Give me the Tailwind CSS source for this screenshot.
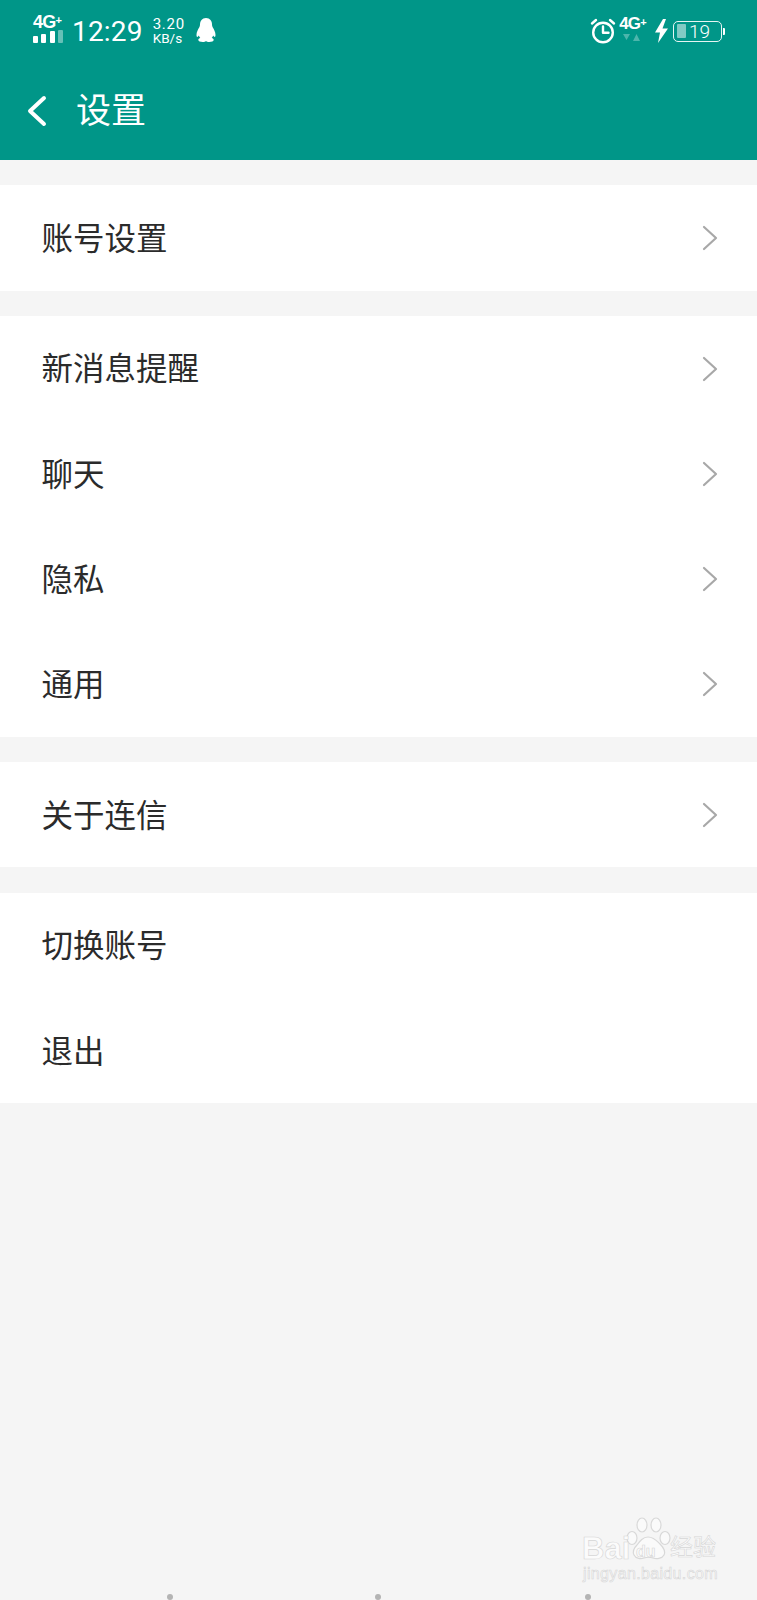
<!DOCTYPE html>
<html lang="zh-CN">
<head>
  <meta charset="UTF-8" />
  <meta name="viewport" content="width=device-width, initial-scale=1.0" />
  <title>设置</title>
  <script src="https://cdn.jsdelivr.net/npm/@tailwindcss/browser@4"></script>
</head>
<body class="bg-[#f5f5f5] font-['Roboto','Noto_Sans_CJK_SC',sans-serif]">
  <div class="relative w-[757px] h-[1600px] overflow-hidden bg-[#f5f5f5]">

    <!-- header -->
    <header class="h-[160px] bg-[#009688] text-white">
      <div class="flex items-center justify-between h-[62px] pl-[33px] pr-[32px]">
        <div class="flex items-center">
          <div class="flex flex-col w-[30px] h-[27px] -mt-[5px]">
            <span class="font-['Liberation_Sans'] font-bold text-[18px] leading-[14px] tracking-[-0.8px] whitespace-nowrap">4G<sup class="text-[11px] leading-none -top-[4px]">+</sup></span>
            <div class="flex items-end gap-[3.500px] h-[13px] mt-[0px]">
              <i class="block w-[5px] h-[7px] bg-white rounded-[1px]"></i>
              <i class="block w-[5px] h-[9px] bg-white rounded-[1px]"></i>
              <i class="block w-[5px] h-[12px] bg-white rounded-[1px]"></i>
              <i class="block w-[5px] h-[13px] bg-white/40 rounded-[1px]"></i>
            </div>
          </div>
          <span class="ml-[9px] text-[28px] leading-none tracking-[0.2px] mt-[2px]">12:29</span>
          <div class="ml-[10px] flex flex-col items-start mt-[-1px]">
            <span class="text-[15px] leading-[14px] tracking-[0.7px]">3.20</span>
            <span class="text-[13.500px] leading-[14px]">KB/s</span>
          </div>
          <svg class="ml-[11px] -mt-[2px]" width="20" height="24" viewBox="0 0 20 24" fill="#fff">
            <path d="M10 0C6 0 4 3 4 6.500c0 1.200-.2 2-.8 3C2 11.500 .5 14 .5 17c0 1.200.3 2 .8 2 .5 0 1-.6 1.500-1.400.3 1 .8 1.800 1.500 2.400-1.200.4-2 1-2 2 0 1.300 2 2 4.500 2 1.500 0 2.500-.4 3.200-1 .7.6 1.700 1 3.200 1 2.500 0 4.500-.7 4.500-2 0-1-.8-1.600-2-2 .7-.6 1.200-1.400 1.500-2.400.5.800 1 1.400 1.500 1.400.5 0 .8-.8.8-2 0-3-1.500-5.500-2.700-7.500-.6-1-.8-1.800-.8-3C16 3 14 0 10 0z"/>
          </svg>
        </div>

        <div class="flex items-center">
          <svg class="mr-[-2px]" width="26" height="26" viewBox="0 0 26 26" fill="none" stroke="#fff" stroke-width="2.400" stroke-linecap="round" stroke-linejoin="round">
            <circle cx="13" cy="14.500" r="9.800"/>
            <path d="M13 8.500v6.300h5.500"/>
            <path d="M2 5.500 6 2M24 5.500 20 2"/>
          </svg>
          <div class="ml-[5px] flex flex-col items-center w-[27px] -mt-[4px]">
            <span class="font-['Liberation_Sans'] font-bold text-[17px] leading-[15px] tracking-[-0.8px] whitespace-nowrap">4G<sup class="text-[11px] leading-none -top-[3px]">+</sup></span>
            <svg class="mt-[2px] mr-[2px]" width="17" height="9" viewBox="0 0 17 9" fill="#fff" fill-opacity=".3">
              <path d="M0 1h7L3.500 7zM10 8l3.500-7L17 8z"/>
            </svg>
          </div>
          <svg class="ml-[9px]" width="13" height="24" viewBox="0 0 13 24" fill="#fff">
            <path d="M8 0 0 13.500h5L3 24l10-14.500H7.500L11 0z"/>
          </svg>
          <div class="ml-[5px] flex items-center">
            <div class="relative flex items-center w-[49px] h-[21px] border-[1.500px] border-white/90 rounded-[5px] pl-[3px]">
              <i class="block w-[9px] h-[14px] bg-white/50 rounded-[1px]"></i>
              <span class="ml-[3px] text-[19px] leading-none font-light">19</span>
            </div>
            <i class="block w-[2px] h-[7px] ml-[1px] bg-white rounded-r-[1px]"></i>
          </div>
        </div>
      </div>

      <div class="flex items-center h-[98px]">
        <svg class="ml-[26px]" width="22" height="32" viewBox="0 0 22 32" fill="none" stroke="#fff" stroke-width="4" stroke-linecap="round" stroke-linejoin="round">
          <path d="M18 3 4 16l14 13"/>
        </svg>
        <h1 class="ml-[28px] text-[35px] font-normal leading-none">设置</h1>
      </div>
    </header>

    <!-- settings lists -->
    <main class="pt-[25px] flex flex-col gap-[25.500px] text-[31.500px] text-[#2b2b2b]">
      <section class="bg-white">
        <div class="flex items-center justify-between h-[105.500px] pl-[41.500px] pr-[39.500px]">
          <span class="mt-[3px]">账号设置</span>
          <svg width="16" height="26" viewBox="0 0 16 26" fill="none" stroke="#a8a8a8" stroke-width="2.200" stroke-linecap="round" stroke-linejoin="round"><path d="M2 2l12 11L2 24"/></svg>
        </div>
      </section>

      <section class="bg-white">
        <div class="flex items-center justify-between h-[105.200px] pl-[41.500px] pr-[39.500px]">
          <span class="mt-[3px]">新消息提醒</span>
          <svg width="16" height="26" viewBox="0 0 16 26" fill="none" stroke="#a8a8a8" stroke-width="2.200" stroke-linecap="round" stroke-linejoin="round"><path d="M2 2l12 11L2 24"/></svg>
        </div>
        <div class="flex items-center justify-between h-[105.200px] pl-[41.500px] pr-[39.500px]">
          <span class="mt-[3px]">聊天</span>
          <svg width="16" height="26" viewBox="0 0 16 26" fill="none" stroke="#a8a8a8" stroke-width="2.200" stroke-linecap="round" stroke-linejoin="round"><path d="M2 2l12 11L2 24"/></svg>
        </div>
        <div class="flex items-center justify-between h-[105.200px] pl-[41.500px] pr-[39.500px]">
          <span class="mt-[3px]">隐私</span>
          <svg width="16" height="26" viewBox="0 0 16 26" fill="none" stroke="#a8a8a8" stroke-width="2.200" stroke-linecap="round" stroke-linejoin="round"><path d="M2 2l12 11L2 24"/></svg>
        </div>
        <div class="flex items-center justify-between h-[105.200px] pl-[41.500px] pr-[39.500px]">
          <span class="mt-[3px]">通用</span>
          <svg width="16" height="26" viewBox="0 0 16 26" fill="none" stroke="#a8a8a8" stroke-width="2.200" stroke-linecap="round" stroke-linejoin="round"><path d="M2 2l12 11L2 24"/></svg>
        </div>
      </section>

      <section class="bg-white">
        <div class="flex items-center justify-between h-[105.200px] pl-[41.500px] pr-[39.500px]">
          <span class="mt-[3px]">关于连信</span>
          <svg width="16" height="26" viewBox="0 0 16 26" fill="none" stroke="#a8a8a8" stroke-width="2.200" stroke-linecap="round" stroke-linejoin="round"><path d="M2 2l12 11L2 24"/></svg>
        </div>
      </section>

      <section class="bg-white">
        <div class="flex items-center h-[105.200px] pl-[41.500px]"><span class="mt-[3px]">切换账号</span></div>
        <div class="flex items-center h-[105.200px] pl-[41.500px]"><span class="mt-[3px]">退出</span></div>
      </section>
    </main>

    <!-- baidu watermark -->
    <div class="absolute left-[580px] top-[1516px] w-[140px] h-[70px] text-[#fbfbfb] [-webkit-text-stroke:0.6px_#d6d6d6]">
      <svg class="absolute left-[46px] top-[1px]" width="46" height="46" viewBox="0 0 46 46" fill="#fafafa" stroke="#d8d8d8" stroke-width="1.200">
        <ellipse cx="6" cy="21" rx="5" ry="6.500"/>
        <ellipse cx="16" cy="8" rx="5" ry="7"/>
        <ellipse cx="30" cy="8" rx="5" ry="7"/>
        <ellipse cx="39" cy="21" rx="5" ry="6.500"/>
        <path d="M22 20c-5 0-8 4-11 8-3 3-5 6-3 10 2 4 7 4 10 3 3-1 6-1 9 0 3 1 9 1 11-3 2-4-1-8-4-11-3-3-6-7-12-7z"/>
      </svg>
      <span class="absolute left-[2px] top-[17px] font-['Liberation_Sans'] font-bold text-[31px] leading-none">Bai</span>
      <span class="absolute left-[56px] top-[28px] font-['Liberation_Sans'] font-bold text-[16px] leading-none">du</span>
      <span class="absolute left-[90px] top-[20px] text-[23px] leading-none">经验</span>
      <span class="absolute left-[3px] top-[50px] font-['Liberation_Sans'] text-[16px] leading-none tracking-[0.35px]">jingyan.baidu.com</span>
    </div>

    <!-- nav bar dots -->
    <i class="absolute left-[167px] top-[1594px] block w-[6px] h-[6px] rounded-full bg-[#b4b4b4]"></i>
    <i class="absolute left-[375px] top-[1594px] block w-[6px] h-[6px] rounded-full bg-[#b4b4b4]"></i>
    <i class="absolute left-[585px] top-[1594px] block w-[6px] h-[6px] rounded-full bg-[#b4b4b4]"></i>
  </div>
</body>
</html>
